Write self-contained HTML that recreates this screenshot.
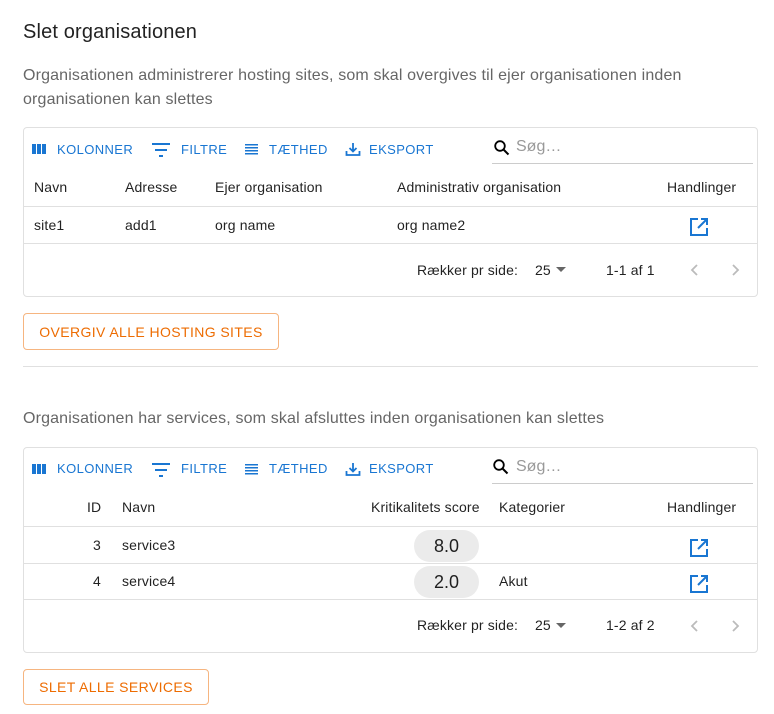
<!DOCTYPE html>
<html><head><meta charset="utf-8"><style>
*{box-sizing:border-box;margin:0;padding:0}
body{width:774px;height:714px;background:#fff;font-family:"Liberation Sans",sans-serif;color:rgba(0,0,0,.87);position:relative;overflow:hidden}
.a{position:absolute;white-space:nowrap}
.box{position:absolute;left:23px;width:735px;border:1px solid #e0e0e0;border-radius:4px}
.hl{position:absolute;left:0;right:0;height:1px;background:#e0e0e0}
.tb{font-size:13px;color:#1976d2;letter-spacing:.4px;font-weight:500}
.f14{font-size:14px;letter-spacing:.15px}
.btn{position:absolute;left:23px;border:1px solid rgba(237,108,2,.5);border-radius:4px;color:#ed6c02;font-size:14px;letter-spacing:.4px;display:flex;align-items:center;justify-content:center}
.pill{position:absolute;width:65px;height:32px;border-radius:16px;background:#ebebeb;font-size:18px;text-align:center;line-height:32px}
</style></head><body>
<div class="a" style="left:23px;top:21px;font-size:20px;letter-spacing:.15px">Slet organisationen</div>
<div class="a" style="left:23px;top:64px;font-size:16px;line-height:24px;color:#666;white-space:normal;width:730px;letter-spacing:.15px">Organisationen administrerer hosting sites, som skal overgives til ejer organisationen inden organisationen kan slettes</div>

<!-- table 1 -->
<div class="box" style="top:127px;height:170px">
  <div class="hl" style="top:78px"></div><div class="hl" style="top:115px"></div>
</div>
<svg class="a" style="left:31px;top:142px" width="16" height="14" viewBox="0 0 16 14"><rect x="1" y="2" width="4" height="10" fill="#1976d2"/><rect x="6" y="2" width="4" height="10" fill="#1976d2"/><rect x="11" y="2" width="4" height="10" fill="#1976d2"/></svg>
<div class="a tb" style="left:57px;top:142px">KOLONNER</div>
<svg class="a" style="left:151px;top:142px" width="20" height="16"><rect x="1" y="1" width="18" height="2" fill="#1976d2"/><rect x="4" y="7" width="12" height="2" fill="#1976d2"/><rect x="8" y="13" width="4" height="2" fill="#1976d2"/></svg>
<div class="a tb" style="left:181px;top:142px">FILTRE</div>
<svg class="a" style="left:245px;top:143px" width="14" height="13"><g fill="#1976d2"><rect y="1" width="13" height="1.5"/><rect y="4" width="13" height="1.5"/><rect y="7" width="13" height="1.5"/><rect y="10" width="13" height="1.5"/></g></svg>
<div class="a tb" style="left:269px;top:142px">TÆTHED</div>
<svg class="a" style="left:345px;top:141px" width="16" height="16" viewBox="0 0 16 16"><path d="M8 2v8M4.5 7l3.5 3.5L11.5 7M1.5 10v4h13v-4" fill="none" stroke="#1976d2" stroke-width="1.8"/></svg>
<div class="a tb" style="left:369px;top:142px">EKSPORT</div>
<svg class="a" style="left:493px;top:139px" width="18" height="18" viewBox="0 0 18 18"><circle cx="7" cy="7" r="4.8" fill="none" stroke="#000" stroke-width="1.8"/><path d="M10.5 10.5l5 5" stroke="#000" stroke-width="2"/></svg>
<div class="a" style="left:516px;top:138px;font-size:16px;color:#999">Søg…</div>
<div class="a" style="left:492px;top:163px;width:261px;height:1px;background:#ccc"></div>
<div class="a f14" style="left:34px;top:179px">Navn</div>
<div class="a f14" style="left:125px;top:179px">Adresse</div>
<div class="a f14" style="left:215px;top:179px">Ejer organisation</div>
<div class="a f14" style="left:397px;top:179px">Administrativ organisation</div>
<div class="a f14" style="left:667px;top:179px">Handlinger</div>
<div class="a f14" style="left:34px;top:217px">site1</div>
<div class="a f14" style="left:125px;top:217px">add1</div>
<div class="a f14" style="left:215px;top:217px">org name</div>
<div class="a f14" style="left:397px;top:217px">org name2</div>
<svg class="a" style="left:689px;top:217px" width="20" height="20" viewBox="0 0 20 20"><path d="M9 2H2v16h16v-7" fill="none" stroke="#1976d2" stroke-width="2"/><path d="M12 2h6v6M18 2L9 11" fill="none" stroke="#1976d2" stroke-width="2"/></svg>
<div class="a f14" style="left:417px;top:262px">Rækker pr side:</div>
<div class="a f14" style="left:535px;top:262px">25</div>
<svg class="a" style="left:556px;top:267px" width="12" height="6"><path d="M0 0h10l-5 5z" fill="#666"/></svg>
<div class="a f14" style="left:606px;top:262px">1-1 af 1</div>
<svg class="a" style="left:690px;top:263px" width="10" height="14"><path d="M7 2L2 7l5 5" fill="none" stroke="#bbb" stroke-width="1.8"/></svg>
<svg class="a" style="left:730px;top:263px" width="10" height="14"><path d="M3 2l5 5-5 5" fill="none" stroke="#bbb" stroke-width="1.8"/></svg>

<div class="btn" style="top:313px;width:256px;height:37px">OVERGIV ALLE HOSTING SITES</div>
<div class="a" style="left:23px;top:366px;width:735px;height:1px;background:#e0e0e0"></div>
<div class="a" style="left:23px;top:410px;font-size:16px;color:#666;letter-spacing:.15px">Organisationen har services, som skal afsluttes inden organisationen kan slettes</div>

<!-- table 2 -->
<div class="box" style="top:447px;height:206px">
  <div class="hl" style="top:78px"></div><div class="hl" style="top:115px"></div><div class="hl" style="top:151px"></div>
</div>
<svg class="a" style="left:31px;top:462px" width="16" height="14" viewBox="0 0 16 14"><rect x="1" y="2" width="4" height="10" fill="#1976d2"/><rect x="6" y="2" width="4" height="10" fill="#1976d2"/><rect x="11" y="2" width="4" height="10" fill="#1976d2"/></svg>
<div class="a tb" style="left:57px;top:461px">KOLONNER</div>
<svg class="a" style="left:151px;top:462px" width="20" height="16"><rect x="1" y="1" width="18" height="2" fill="#1976d2"/><rect x="4" y="7" width="12" height="2" fill="#1976d2"/><rect x="8" y="13" width="4" height="2" fill="#1976d2"/></svg>
<div class="a tb" style="left:181px;top:461px">FILTRE</div>
<svg class="a" style="left:245px;top:463px" width="14" height="13"><g fill="#1976d2"><rect y="1" width="13" height="1.5"/><rect y="4" width="13" height="1.5"/><rect y="7" width="13" height="1.5"/><rect y="10" width="13" height="1.5"/></g></svg>
<div class="a tb" style="left:269px;top:461px">TÆTHED</div>
<svg class="a" style="left:345px;top:461px" width="16" height="16" viewBox="0 0 16 16"><path d="M8 2v8M4.5 7l3.5 3.5L11.5 7M1.5 10v4h13v-4" fill="none" stroke="#1976d2" stroke-width="1.8"/></svg>
<div class="a tb" style="left:369px;top:461px">EKSPORT</div>
<svg class="a" style="left:492px;top:458px" width="18" height="18" viewBox="0 0 18 18"><circle cx="7" cy="7" r="4.8" fill="none" stroke="#000" stroke-width="1.8"/><path d="M10.5 10.5l5 5" stroke="#000" stroke-width="2"/></svg>
<div class="a" style="left:516px;top:458px;font-size:16px;color:#999">Søg…</div>
<div class="a" style="left:492px;top:483px;width:261px;height:1px;background:#ccc"></div>
<div class="a f14" style="left:87px;top:499px">ID</div>
<div class="a f14" style="left:122px;top:499px">Navn</div>
<div class="a f14" style="left:371px;top:499px">Kritikalitets score</div>
<div class="a f14" style="left:499px;top:499px">Kategorier</div>
<div class="a f14" style="left:667px;top:499px">Handlinger</div>
<div class="a f14" style="left:93px;top:537px">3</div>
<div class="a f14" style="left:122px;top:537px">service3</div>
<div class="pill" style="left:414px;top:530px">8.0</div>
<svg class="a" style="left:689px;top:538px" width="20" height="20" viewBox="0 0 20 20"><path d="M9 2H2v16h16v-7" fill="none" stroke="#1976d2" stroke-width="2"/><path d="M12 2h6v6M18 2L9 11" fill="none" stroke="#1976d2" stroke-width="2"/></svg>
<div class="a f14" style="left:93px;top:573px">4</div>
<div class="a f14" style="left:122px;top:573px">service4</div>
<div class="pill" style="left:414px;top:566px">2.0</div>
<div class="a f14" style="left:499px;top:573px">Akut</div>
<svg class="a" style="left:689px;top:574px" width="20" height="20" viewBox="0 0 20 20"><path d="M9 2H2v16h16v-7" fill="none" stroke="#1976d2" stroke-width="2"/><path d="M12 2h6v6M18 2L9 11" fill="none" stroke="#1976d2" stroke-width="2"/></svg>
<div class="a f14" style="left:417px;top:617px">Rækker pr side:</div>
<div class="a f14" style="left:535px;top:617px">25</div>
<svg class="a" style="left:556px;top:623px" width="12" height="6"><path d="M0 0h10l-5 5z" fill="#666"/></svg>
<div class="a f14" style="left:606px;top:617px">1-2 af 2</div>
<svg class="a" style="left:690px;top:619px" width="10" height="14"><path d="M7 2L2 7l5 5" fill="none" stroke="#bbb" stroke-width="1.8"/></svg>
<svg class="a" style="left:730px;top:619px" width="10" height="14"><path d="M3 2l5 5-5 5" fill="none" stroke="#bbb" stroke-width="1.8"/></svg>

<div class="btn" style="top:669px;width:186px;height:36px">SLET ALLE SERVICES</div>
</body></html>
